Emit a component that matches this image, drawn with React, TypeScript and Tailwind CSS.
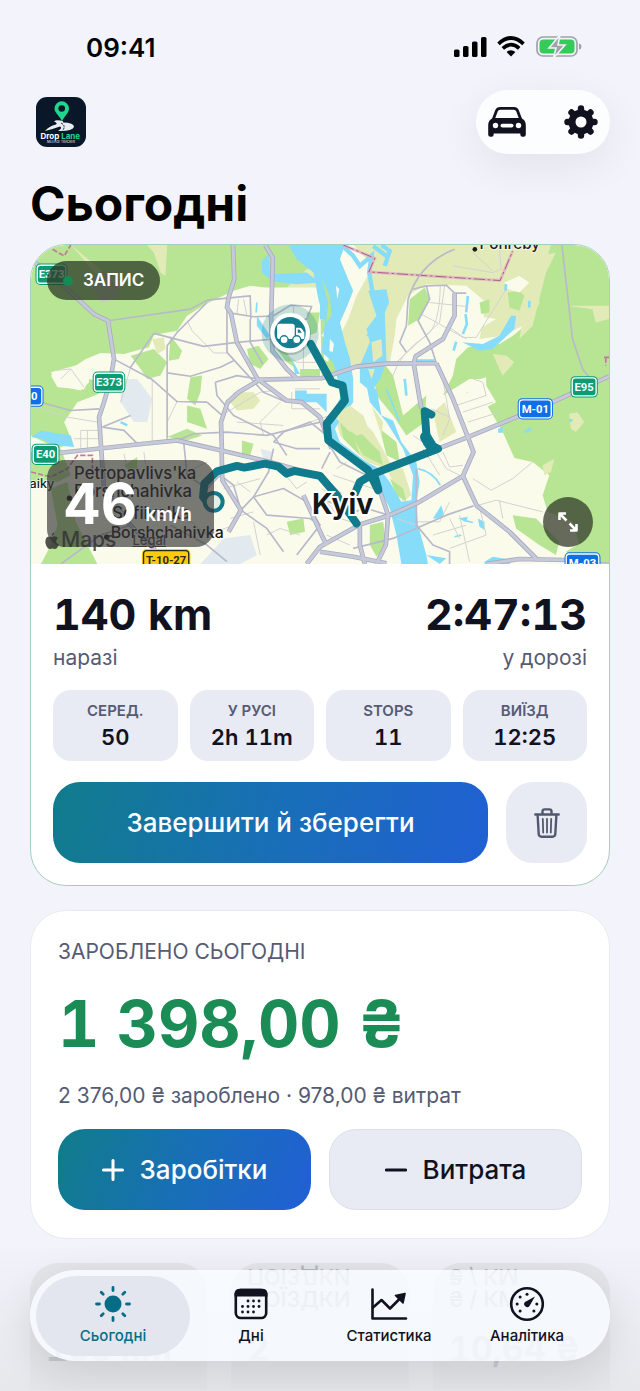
import type { ReactNode } from "react";

type Shield = {
  x: number;
  y: number;
  w: number;
  label: string;
  fill: string;
  ink?: string;
};

const shields: Shield[] = [
  { x: 92, y: 115, w: 96, label: "E373", fill: "#0b9c74" },
  { x: 265, y: 440, w: 98, label: "E373", fill: "#0b9c74" },
  { x: 1695, y: 454, w: 82, label: "E95", fill: "#0b9c74" },
  { x: 74, y: 657, w: 84, label: "E40", fill: "#0b9c74" },
  { x: 30, y: 482, w: 76, label: "30", fill: "#0f6fe8" },
  { x: 1548, y: 520, w: 106, label: "M-01", fill: "#0f6fe8" },
  { x: 1690, y: 984, w: 108, label: "M-03", fill: "#0f6fe8" },
  { x: 437, y: 974, w: 146, label: "T-10-27", fill: "#ffcb0b", ink: "#2a2a1c" },
];

const majorRoads = [
  "M30 70 L140 160 L220 235 L262 255 L280 370 L270 430 L250 500 L235 545 L245 690 L250 760 L330 870 L400 940 L420 990",
  "M638 27 L642 130 L625 185 L620 215 L632 232 L650 320 L712 430 L800 495 L845 500 L900 545 L935 640",
  "M735 27 L758 65 L753 250 L757 345 L800 400 L832 430",
  "M605 650 L602 560 L622 500 L655 470 L720 432 L905 428 L1010 393 L1100 384 L1250 383",
  "M1305 172 L1305 240 L1270 310 L1188 362 L1182 383 L1205 520",
  "M1250 383 L1300 490 L1345 605 L1362 650 L1330 722 L1372 812 L1470 890 L1555 975",
  "M1770 422 L1600 500 L1345 605 L1255 640",
  "M30 662 L140 650 L370 625 L470 615 L600 645 L750 680 L900 722 L960 780",
  "M604 645 L606 735 L662 825 L625 890",
  "M1330 722 L1200 800 L1105 842 L1020 868 L900 935 L860 987",
  "M1080 765 L1105 840 L1098 930 L1070 987",
  "M1020 868 L1020 930 L1035 987",
  "M850 780 L905 900 L920 930",
  "M900 950 L1000 965 L1100 985",
  "M1400 987 L1500 972 L1640 975 L1770 990",
];

const mediumRoads = [
  "M30 492 L150 525 L235 520",
  "M760 640 L745 710 L700 785 L662 825 L740 880 L790 950",
  "M262 255 L510 220 L560 193 L690 180 L692 250",
  "M632 232 L700 243 L755 241",
  "M620 215 L620 350 L730 470 L800 500",
  "M400 293 L550 332 L650 320 L760 310",
  "M400 293 L330 395 M283 372 L395 432 L470 498 L560 500",
  "M440 610 V330 L470 290 L560 200",
  "M440 412 L510 422 L600 395 L640 375",
  "M690 250 L690 320 L728 385",
  "M760 240 L812 208 L875 212 L860 250 L800 262",
  "M585 440 L590 480 L640 540 L760 600 L800 660",
  "M585 440 L650 420 L712 430",
  "M560 500 L605 540 M470 615 L520 595 L620 590 L740 600 L900 560",
  "M245 575 L310 585 L350 625 M245 575 L330 540",
  "M490 622 L500 720 L560 760 L600 720",
  "M600 720 L640 750 L662 825 M700 785 L790 760 L860 800 L900 870 L830 960",
  "M700 785 L740 840 L870 850 L900 870",
  "M760 620 L830 640 L900 640 M760 620 L790 590 L870 560 L920 600",
  "M1305 40 Q1200 80 1165 190 L1160 270 L1140 320 L1160 350",
  "M1180 160 L1220 150 L1280 148 L1305 172 L1340 172",
  "M1220 150 L1230 190 L1195 255 L1230 320 L1250 383",
  "M1628 27 L1660 310 L1690 400 L1715 430",
  "M1205 492 L1210 570 L1225 640",
  "M1362 812 L1280 840 L1120 910 L1000 940",
  "M1190 700 V870 L1240 930 L1290 950 L1290 987",
  "M935 640 L960 680 L1040 720 L1080 765 M905 700 L930 650",
  "M880 780 L1000 830 L1040 820 L1100 838",
  "M450 870 L560 930 L620 980 M120 987 L240 900 L330 870",
];

const minorRoads = [
  "M30 500 L60 520 L140 545 L230 560 M180 585 H245 M180 585 V640 M160 610 H240 M200 585 V645",
  "M500 255 L515 285 L560 330 L580 352 L620 352",
  "M100 405 L150 400 L190 455 M150 400 L120 430",
  "M395 432 V620 M330 395 L300 500 M470 498 L440 560",
  "M655 190 L650 235 M670 190 L680 240 M780 345 L830 380 L900 380 M820 210 L825 340 M850 260 V400",
  "M620 530 L720 470 L760 465 M780 500 L720 560 L730 600 M650 560 L790 570",
  "M815 470 V520 H900 M825 460 H900 M870 560 L930 540",
  "M1120 420 Q1140 350 1220 300 Q1260 270 1262 150 M1130 380 L1260 260 L1275 150",
  "M1230 200 L1340 212 M1205 235 L1260 265 L1330 305 L1370 305 L1460 160 M1290 275 L1340 310",
  "M1300 90 L1420 110 L1445 100 L1440 40 M1360 50 L1420 105",
  "M1270 430 L1290 550 L1270 600 M1235 520 L1290 545 M1310 510 L1400 480 L1390 440 L1360 430 M1330 530 L1420 500 M1345 560 L1440 530",
  "M1180 600 L1250 650 L1280 700 L1320 720 M1270 650 L1290 695 L1330 690 M1210 640 L1260 720",
  "M1360 730 L1415 765 L1480 730 L1540 680 M1370 812 L1430 795 L1570 830 M1440 795 L1450 850",
  "M1190 860 H1260 L1290 800 M1240 900 L1340 870 M1290 850 L1320 910 M1320 840 L1350 980 M1380 815 L1400 900 L1290 940",
  "M700 860 L720 960 M500 850 L560 900 L640 870 M740 900 L780 880 L840 900 M520 700 L560 680",
  "M920 800 L960 850 L1010 865 M940 720 L1060 760 M950 700 L980 680 M905 760 L940 790 M1130 850 L1190 870 M920 900 L990 930",
  "M610 760 L720 730 M650 740 L690 770 M370 650 L380 720 M630 850 L700 830 M780 700 L830 760 L860 740 M310 655 L320 700",
];

// Main route, spur to the east bank and the western leg
const trackLines = [
  "M872 325 L935 440 L968 450 L975 495 L920 565 L925 615 L1045 705 L1075 765",
  "M1075 760 L1062 715 L1255 640 L1222 622 L1215 527 L1235 537",
  "M1062 715 L1020 740 L1005 775",
  "M560 800 L548 785 L552 745 L590 708 L650 692 L672 697 L735 685 L775 694 L800 715 L822 707 L900 722 L950 780 L1010 865",
];

function CityMap() {
  return (
    <svg
      viewBox="30 27 1740 960"
      preserveAspectRatio="xMidYMid slice"
      className="block h-full w-full"
      fontFamily="Inter, sans-serif"
      role="img"
      aria-label="Kyiv"
    >
      <rect x="30" y="27" width="1740" height="960" fill="#fbfbec" />

      {/* Forest and parks */}
      <g fill="#b8e593">
        <path d="M30 27 H830 L850 60 L900 120 L800 155 H735 L690 150 L640 165 L555 205 L500 240 L470 285 L400 298 L385 335 L310 355 L240 352 L195 370 L150 400 L90 420 L110 455 L190 462 L205 430 L240 440 L235 475 L170 500 L130 560 L155 620 L110 640 L30 600Z" />
        <path d="M1590 27 H1770 V987 H1700 L1640 950 L1680 925 L1660 860 L1585 830 L1570 780 L1590 720 L1540 680 L1485 668 L1450 590 L1400 505 L1340 470 L1400 460 L1380 430 L1350 430 L1270 480 L1300 420 L1310 370 L1345 335 L1440 325 L1480 300 L1530 260 L1560 200 L1550 150Z" />
        <path d="M30 650 L120 640 L150 720 L110 740 L30 740Z M90 760 L140 740 L165 860 L230 987 H60 L90 930 L110 870Z" />
        <path d="M330 360 L400 340 L440 380 L420 420 L380 430 L360 400Z M450 300 L485 345 L475 370 L445 375Z M510 425 L545 420 L540 470 L525 510 L500 490Z M500 510 L540 520 L560 580 L500 560Z M440 605 L500 580 L545 600 L500 615Z" />
        <path d="M680 340 L715 330 L745 370 L720 400 L690 385Z M665 615 L700 625 L690 660 L665 655Z M310 690 L350 665 L350 700 L330 710Z M800 860 L850 850 L855 890 L810 900Z M840 400 L900 400 V425 H840Z" />
        <path d="M1480 840 L1550 850 L1620 920 L1610 960 L1560 930 L1490 880Z M1050 870 L1090 860 L1100 930 L1070 965 L1050 930Z" />
        <path d="M900 150 L940 190 L930 260 L905 300 L940 330 L960 400 L930 440 L905 420Z M860 230 H900 L890 290 L865 300Z M770 340 L800 350 L830 400 L800 380Z" />
        <path d="M1170 190 L1215 155 L1230 190 L1200 250 L1165 270Z M970 360 L1060 340 L1120 420 L1150 540 L1220 480 L1215 560 L1160 600 L1120 540 L1070 480 L1060 400 L1000 400Z" />
      </g>
      <g fill="#e2eab7">
        <path d="M1000 27 H1595 L1580 75 L1550 150 L1560 200 L1530 260 L1450 300 L1380 310 L1400 200 L1340 150 L1220 145 L1165 180 L1130 250 L1125 300 L1110 380 L1060 370 L970 400 L960 300 L985 250 L1010 180 L1060 90Z" />
        <path d="M800 155 L860 100 L900 90 L910 155Z M150 27 L300 150 L290 160 L220 110 L180 60Z M380 27 H440 L435 120 L420 110 L400 50Z" />
        <path d="M640 470 L700 470 L720 495 L700 520 L650 525 L630 500Z M1640 210 H1770 V250 L1730 260 L1720 220Z M1420 355 L1460 360 L1485 380 L1450 420 L1440 400Z M1650 535 L1675 530 L1695 560 L1670 590 L1655 580Z M1570 690 L1605 670 L1595 710 L1575 720Z" />
        <path d="M940 520 L970 500 L1060 590 L1110 680 L1150 700 L1175 780 L1150 800 L1100 700 L1040 680 L960 600Z M1560 60 L1610 50 L1580 110 L1540 270 L1500 310 L1510 250Z" />
        <path d="M395 310 L430 305 L435 340 L410 355Z M1240 530 L1275 500 L1310 590 L1260 620Z" />
      </g>
      <g fill="#b8e593">
        <path d="M1465 170 L1500 165 L1515 180 L1500 225 L1470 215Z M1380 200 L1410 190 L1410 230 L1385 235Z M1080 580 L1130 620 L1140 680 L1100 660Z M1110 730 L1150 760 L1160 800 L1130 780Z M960 560 L1000 600 L1020 660 L970 610Z" />
      </g>
      <g fill="#fbfbec">
        <path d="M1455 140 L1500 120 L1530 140 L1500 170 L1465 160Z M1360 240 L1430 250 L1360 290Z M20 800 L70 770 L90 850 L30 860Z M90 410 L200 380 L205 440 L180 465 L110 450Z" />
        <path d="M1350 440 L1400 425 L1400 450 L1430 500 L1400 515 L1340 500Z M910 320 L930 330 L925 380 L912 370Z" />
      </g>
      <path d="M200 130 L250 105 L300 165 L285 190 L240 200Z" fill="#c9cbc3" />
      <path
        d="M300 430 L350 430 L395 490 L380 560 L340 560 L300 500Z M610 910 L690 900 L710 960 L660 987 H540Z M720 640 L760 650 L740 700Z"
        fill="#e2e9ef"
      />

      {/* Dnipro and lakes */}
      <g fill="#87dcf9">
        <path d="M805 27 H975 L960 70 L985 130 L1000 165 L980 215 L960 260 L975 320 L990 370 L1000 430 L1000 500 L970 540 L945 580 L960 620 L1040 680 L1080 700 L1110 740 L1145 800 L1175 795 L1180 720 L1150 640 L1100 560 L1050 500 L1040 450 L1070 460 L1085 540 L1120 555 L1145 620 L1190 680 L1200 740 L1190 800 L1195 870 L1220 960 L1225 987 H1145 L1130 900 L1110 820 L1080 760 L1040 710 L930 620 L918 565 L965 480 L955 440 L940 380 L905 350 L915 260 L895 190 L880 110 L830 70Z" />
        <path d="M1045 165 L1100 160 L1108 200 L1095 230 L1100 380 L1080 430 L1055 470 L1020 440 L1020 390 L1050 320 L1040 280 L1070 240Z" />
        <path d="M1328 320 L1390 325 L1440 300 L1475 240 L1490 240 L1485 280 L1420 340 L1380 345Z M725 75 L745 55 L750 130 L725 110Z M750 115 L860 110 L900 140 L830 145 L750 135Z M710 240 L750 300 L740 310 L710 270Z M815 370 L840 415 L825 415Z M900 165 L925 190 L920 250 L900 250Z M825 465 H860 V475 H920 V530 L890 500 H825Z" />
        <path d="M30 605 L60 585 L150 600 L160 635 L100 630 L60 610Z M1240 850 L1265 810 L1275 845 L1250 850Z M1315 850 L1345 845 L1340 860Z M1375 850 L1395 860 V885 L1380 875Z M1395 980 L1420 965 L1480 975 L1470 987 H1395Z M1220 960 L1280 970 L1260 987Z M1436 580 L1450 575 V592 H1436Z" />
      </g>
      <g fill="none" stroke="#87dcf9" strokeWidth="8">
        <path d="M965 27 L1000 60 L1020 90 L1055 60 L1048 110 L1060 180 M1085 27 L1110 45 L1095 90 M1060 30 L1100 60" strokeWidth="13" />
        <path d="M1345 180 L1340 230 M1338 235 L1342 265 L1330 295 M1310 318 L1302 345 M1155 430 L1160 480 M1460 145 L1458 165 M1530 195 V215 M1190 375 H1245 M1515 590 L1535 580 M1650 555 H1660 M300 560 L320 570" />
        <path d="M1195 700 Q1240 710 1262 750 M1040 300 L1080 280 M1100 460 L1140 560 M1080 400 V430 M1305 905 L1325 900 M1330 855 L1360 862 M710 200 L708 230" strokeWidth="5" />
      </g>
      <g fill="#e2eab7">
        <path d="M905 130 L930 180 L935 240 L918 262 L925 200Z M990 590 L1010 580 L1080 650 L1090 690 L1030 660Z" fill="#b8e593" />
        <path d="M940 540 L990 510 L1030 540 L1050 590 L1010 600 L970 570Z M1055 510 L1090 560 L1085 600Z M1055 320 L1085 310 L1088 360 L1060 380Z M1045 400 L1065 400 L1055 430Z" />
      </g>
      <path d="M930 310 L942 325 L938 350 L928 345Z M948 150 L958 160 L952 190Z" fill="#fbfbec" />

      {/* Administrative border */}
      <g fill="none">
        <path d="M970 27 L1065 67 L1047 108 L1442 134 L1480 45" stroke="#e0b3c0" strokeWidth="9" opacity=".8" />
        <path d="M970 27 L1065 67 L1047 108 L1442 134 L1480 45" stroke="#ad5c90" strokeWidth="3" strokeDasharray="34 8 8 8" />
        <path d="M95 40 L130 60 L150 27 M1755 365 H1775 M1760 365 V390 M30 710 L90 725 L140 700 L170 660 L215 660 L215 700" stroke="#c077a0" strokeWidth="5" strokeDasharray="16 6" />
      </g>

      {/* Streets */}
      <g fill="none" strokeLinejoin="round">
        {minorRoads.map((d) => (
          <path key={d} d={d} stroke="#d2d2d2" strokeWidth="3" />
        ))}
        {mediumRoads.map((d) => (
          <path key={d} d={d} stroke="#b8b9ca" strokeWidth="5" />
        ))}
        {majorRoads.map((d) => (
          <path key={d} d={d} stroke="#a9abbf" strokeWidth="14" />
        ))}
        {majorRoads.map((d) => (
          <path key={d} d={d} stroke="#c6c9d9" strokeWidth="9" />
        ))}
      </g>

      {shields.map((s) => (
        <g key={`${s.x}-${s.y}`}>
          <rect x={s.x - s.w / 2} y={s.y - 32} width={s.w} height="64" rx="14" fill={s.fill} />
          <rect x={s.x - s.w / 2 + 5} y={s.y - 27} width={s.w - 10} height="54" rx="10" fill="none" stroke={s.ink ?? "#fff"} strokeWidth="4" />
          <text
            x={s.x}
            y={s.y + 12}
            textAnchor="middle"
            fontFamily="Roboto, sans-serif"
            fontSize="34"
            fontWeight="700"
            fill={s.ink ?? "#fff"}
          >
            {s.label}
          </text>
        </g>
      ))}

      {/* Recorded track */}
      <circle cx="810" cy="292" r="86" fill="#0f7c8e" opacity=".22" />
      <g fill="none" stroke="#0f7b8c" strokeWidth="24" strokeLinecap="round" strokeLinejoin="round">
        {trackLines.map((d) => (
          <path key={d} d={d} />
        ))}
      </g>
      <path d="M1218 605 L1232 628" stroke="#0f7b8c" strokeWidth="34" strokeLinecap="round" />
      <circle cx="580" cy="800" r="27" fill="#e6efe6" stroke="#0f7b8c" strokeWidth="12" />

      {/* Place names */}
      <g fill="#1c1c1a" stroke="#fff" strokeOpacity=".6" strokeWidth="6" paintOrder="stroke" fontSize="46" fontWeight="500">
        <circle cx="1366" cy="40" r="7" stroke="none" />
        <text x="1380" y="39">Pohreby</text>
        <text x="26" y="757" fontSize="38">aiky</text>
        <text x="160" y="731" fontSize="50">Petropavlivs'ka</text>
        <text x="160" y="786" fontSize="50">Borshchahivka</text>
        <circle cx="146" cy="789" r="8" stroke="none" />
        <text x="275" y="853" fontSize="50">Sofiivs'ka</text>
        <text x="270" y="908" fontSize="48">Borshchahivka</text>
        <circle cx="258" cy="906" r="8" stroke="none" />
      </g>
      <text x="876" y="838" fontSize="86" fontWeight="700" fill="#161616" stroke="#fff" strokeWidth="12" paintOrder="stroke">
        Kyiv
      </text>

      {/* Vehicle marker */}
      <circle cx="810" cy="295" r="63" fill="#000" opacity=".16" />
      <circle cx="810" cy="291" r="60" fill="#fff" />
      <circle cx="810" cy="291" r="47" fill="#127e90" />
      <g fill="#fff">
        <rect x="771" y="264" width="53" height="46" rx="8" />
        <path d="M828 276 H838 Q843 276 846 280 L853 290 V306 Q853 310 849 310 H828Z" />
        <path d="M833 281 H838 L845 291 H833Z" fill="#127e90" />
        <circle cx="792" cy="312" r="12" stroke="#127e90" strokeWidth="4" />
        <circle cx="830" cy="312" r="12" stroke="#127e90" strokeWidth="4" />
      </g>
    </svg>
  );
}

function StatusIcons() {
  return (
    <svg viewBox="0 0 128 24" className="h-6 w-32" aria-hidden="true">
      <g>
        <rect x="0" y="13.500" width="5.500" height="7.500" rx="1.600" />
        <rect x="9" y="10" width="5.500" height="11" rx="1.600" />
        <rect x="18" y="5.500" width="5.500" height="15.500" rx="1.600" />
        <rect x="27" y="1" width="5.500" height="20" rx="1.600" />
      </g>
      <g fill="none" stroke="#000" strokeWidth="3.700">
        <path d="M44.500 7.800 Q57 -3.800 69.500 7.800" />
        <path d="M48.800 12.300 Q57 5 65.200 12.300" />
      </g>
      <path d="M52.600 16 Q57 12.400 61.400 16 L57 20.600Z" />
      <rect x="83" y="1" width="40" height="19" rx="6" fill="none" stroke="#a1a2a8" strokeWidth="1.700" />
      <path d="M125 7.500 Q127.500 8 127.500 10.500 Q127.500 13 125 13.500Z" fill="#a1a2a8" />
      <rect x="85.500" y="3.500" width="35" height="14" rx="4" fill="#34cb59" />
      <path d="M106 -1 L95 12 H102 L99.500 22 L111 9 H104Z" fill="#a1a2a8" stroke="#f2f3fb" strokeWidth="1.600" />
    </svg>
  );
}

function Logo() {
  return (
    <svg viewBox="0 0 50 50" className="size-[50px]" role="img" aria-label="Drop Lane">
      <rect width="50" height="50" rx="11" fill="#0a1728" />
      <path d="M26 24 C22 17 18.500 15.500 18.500 11.500 A7.200 7.200 0 0 1 33 11.500 C33 15.500 29.500 18 26 24Z" fill="#1fd68d" />
      <circle cx="25.700" cy="11.500" r="3.300" fill="#0a1728" />
      <path d="M18 24.500 Q20 22.500 24 23.500 Q28 24 27 25.500 Q38 25.500 38 30 Q36 34.500 22 34 Q27 31 24 29.500 Q17 32 9 34 Q13 29 20 27.500Q22 26 18 24.500Z" fill="#e8edf2" />
      <path d="M25 26 Q30 28.500 27 33" fill="none" stroke="#0a1728" strokeWidth="1" strokeDasharray="2 1" />
      <text x="4.500" y="41.500" fontFamily="Inter, sans-serif" fontSize="8" fontWeight="700" fill="#fff">
        Drop <tspan fill="#1fd68d">Lane</tspan>
      </text>
      <text x="25" y="46" textAnchor="middle" fontFamily="Inter, sans-serif" fontSize="3" fontWeight="600" fill="#c3cad4">
        MILEAGE TRACKER
      </text>
    </svg>
  );
}

function CarIcon() {
  return (
    <svg viewBox="0 0 38 30" className="h-[30px] w-[38px]" fill="#11121f" aria-hidden="true">
      <path d="M5 13 L8.500 3.800 Q9.500 1.400 12.200 1.400 H25.800 Q28.500 1.400 29.500 3.800 L33 13" fill="none" stroke="#11121f" strokeWidth="2.800" />
      <path d="M5 11 H33 Q37.800 13 37.800 18 V27.500 Q37.800 29.800 35.600 29.800 H34.500 Q32.300 29.800 32.300 27.500 V26.500 H5.700 V27.500 Q5.700 29.800 3.500 29.800 H2.400 Q.2 29.800 .2 27.500 V18 Q.2 13 5 11Z" />
      <g fill="#fcfdff">
        <circle cx="7.500" cy="18.500" r="2.700" />
        <circle cx="30.500" cy="18.500" r="2.700" />
        <rect x="12.500" y="16.700" width="13" height="3.800" rx="1.900" />
      </g>
    </svg>
  );
}

function GearIcon() {
  return (
    <svg viewBox="-17 -17 34 34" className="size-[34px]" aria-hidden="true">
      <circle r="9" fill="none" stroke="#11121f" strokeWidth="7" />
      <g stroke="#11121f" strokeWidth="6.400" strokeLinecap="round">
        <path d="M0 -11 V-13.500 M0 11 V13.500 M-11 0 H-13.500 M11 0 H13.500" />
        <path d="M8 -8 L9.500 -9.500 M-8 -8 L-9.500 -9.500 M8 8 L9.500 9.500 M-8 8 L-9.500 9.500" />
      </g>
    </svg>
  );
}

function TrashIcon() {
  return (
    <svg viewBox="0 0 26 30" className="h-[30px] w-[26px]" fill="none" stroke="#525870" strokeWidth="2.400" strokeLinecap="round" strokeLinejoin="round" aria-hidden="true">
      <path d="M1.300 6.500 H24.700 M8.500 6 V3.500 Q8.500 1.400 10.600 1.400 H15.400 Q17.500 1.400 17.500 3.500 V6" />
      <path d="M3.600 7 L4.700 26 Q4.900 28.700 7.500 28.700 H18.500 Q21.100 28.700 21.300 26 L22.400 7" />
      <path d="M8.800 11 L9.200 24.500 M13 11 V24.500 M17.200 11 L16.800 24.500" strokeWidth="1.800" />
    </svg>
  );
}

function SunIcon() {
  return (
    <svg viewBox="-18 -18 36 36" className="size-9" aria-hidden="true">
      <circle r="8.500" fill="#056e86" />
      <path
        d="M0 -13.500 V-16.500 M0 13.500 V16.500 M-13.500 0 H-16.500 M13.500 0 H16.500 M9.800 -9.800 L11.800 -11.800 M-9.800 -9.800 L-11.800 -11.800 M9.800 9.800 L11.800 11.800 M-9.800 9.800 L-11.800 11.800"
        stroke="#056e86"
        strokeWidth="2.800"
        strokeLinecap="round"
      />
    </svg>
  );
}

function CalendarIcon() {
  const dots = [
    [15, 15], [20.5, 15], [26, 15],
    [9.5, 20.5], [15, 20.5], [20.5, 20.5], [26, 20.5],
    [9.5, 26], [15, 26], [20.5, 26],
  ];
  return (
    <svg viewBox="0 0 36 36" className="size-9" aria-hidden="true">
      <rect x="2.800" y="4" width="30.400" height="28" rx="5" fill="none" stroke="#11121f" strokeWidth="2.600" />
      <path d="M1.500 10.500 V8 Q1.500 2.700 7 2.700 H29 Q34.500 2.700 34.500 8 V10.500Z" fill="#11121f" />
      {dots.map(([x, y]) => (
        <circle key={`${x}-${y}`} cx={x} cy={y} r="1.400" fill="#11121f" />
      ))}
    </svg>
  );
}

function ChartIcon() {
  return (
    <svg viewBox="0 0 38 36" className="h-9 w-[38px]" fill="none" stroke="#11121f" strokeWidth="2.600" strokeLinecap="round" strokeLinejoin="round" aria-hidden="true">
      <path d="M2.500 3.500 V32.500 H36" />
      <path d="M3 21.500 L11.500 14 L20 22.500 L31 11.500" />
      <path d="M35 7.500 L25.500 9.500 L33 17Z" fill="#11121f" strokeWidth="1.600" />
    </svg>
  );
}

function GaugeIcon() {
  return (
    <svg viewBox="-18 -18 36 36" className="size-9" fill="#11121f" aria-hidden="true">
      <circle r="15.800" fill="none" stroke="#11121f" strokeWidth="2.600" />
      <circle cx="0" cy="-9.800" r="1.500" />
      <circle cx="-6.900" cy="-6.900" r="1.500" />
      <circle cx="-9.800" cy="0" r="1.500" />
      <circle cx="9.800" cy="0" r="1.500" />
      <circle cx="-6.900" cy="6.900" r="1.500" />
      <circle cx="6.900" cy="6.900" r="1.500" />
      <path d="M8 -7.500 L2.500 2 A3 3 0 1 1 -2 -2Z" />
    </svg>
  );
}

function StatTile({ label, value }: { label: string; value: string }) {
  return (
    <div className="flex h-[71px] flex-col items-center justify-center gap-0.5 rounded-[18px] bg-[#e8eaf4]">
      <span className="text-[15px] font-semibold leading-5 text-[#565b74]">{label}</span>
      <span className="text-[22px] font-semibold leading-7 tabular-nums text-[#11121f]">{value}</span>
    </div>
  );
}

function TabItem({ label, icon, active }: { label: string; icon: ReactNode; active?: boolean }) {
  return (
    <a
      href="#"
      aria-current={active ? "page" : undefined}
      className={`flex h-20 flex-col items-center justify-center rounded-full text-[15px] font-medium leading-5 ${
        active ? "-mx-2 bg-[#dfe3ec]/85 text-[#056e86]" : "text-[#11121f]"
      }`}
    >
      {icon}
      <span className="mt-1">{label}</span>
    </a>
  );
}

const stats = [
  { label: "СЕРЕД.", value: "50" },
  { label: "У РУСІ", value: "2h 11m" },
  { label: "STOPS", value: "11" },
  { label: "ВИЇЗД", value: "12:25" },
];

const totals = [
  { label: "", value: "106 km" },
  { label: "ПОЇЗДКИ", value: "2" },
  { label: "₴ / КМ", value: "10,64 ₴" },
];

export default function App() {
  return (
    <div className="relative min-h-screen overflow-hidden bg-[#f2f3fb] px-[30px] font-['Inter',sans-serif] text-black">
      {/* Status bar */}
      <div className="flex h-[90px] items-center justify-between pl-14 pr-7 pt-1.5">
        <span className="text-[26px] font-semibold leading-8">09:41</span>
        <StatusIcons />
      </div>

      <header>
        <div className="flex h-16 items-center justify-between pl-1.5">
          <Logo />
          <div className="flex h-16 w-[134px] items-center justify-between rounded-full bg-[#fcfdff] px-3 shadow-[0_12px_44px_rgba(0,0,0,0.07)]">
            <button type="button" aria-label="Авто">
              <CarIcon />
            </button>
            <button type="button" aria-label="Налаштування">
              <GearIcon />
            </button>
          </div>
        </div>
        <h1 className="mb-2.5 mt-5 text-[48px] font-bold leading-[60px]">Сьогодні</h1>
      </header>

      {/* Active trip */}
      <section className="overflow-hidden rounded-[36px] border border-[#a3cfc0] bg-white">
        <div className="relative h-[319px]">
          <CityMap />
          <div className="absolute left-4 top-4 flex h-[39px] items-center gap-2.5 rounded-full bg-[#2c3a25]/75 px-4 text-[17px] font-semibold text-white">
            <span className="size-2.5 rounded-full bg-[#158a55]" />
            ЗАПИС
          </div>
          <div className="absolute bottom-[17px] left-4 flex h-[87px] w-[167px] items-center gap-2 rounded-[18px] bg-[#333]/65 pl-4 text-white">
            <span className="text-[56px] font-bold leading-[56px]">46</span>
            <span className="pt-6 text-[19px] font-semibold">km/h</span>
          </div>
          <div className="absolute bottom-2.5 left-3.5 flex items-center gap-4 text-[#333]/85">
            <span className="flex items-center text-[21px] font-medium leading-7">
              <svg viewBox="0 0 14 17" className="mr-0.5 h-[17px] w-3.5" fill="currentColor" aria-hidden="true">
                <path d="M9.500 0 Q9.500 3 6.800 4 Q6.800 1 9.500 0Z M7 5 Q10.500 3.300 13 6 Q10.500 8 11.500 11 L13.800 12.500 Q12 17 10 17 Q7 16 5 17 Q2 17 .4 11 Q0 4.500 4 4.500Z" />
              </svg>
              Maps
            </span>
            <a href="#" className="text-[13px] font-medium leading-4 underline">
              Legal
            </a>
          </div>
          <button
            type="button"
            aria-label="Розгорнути мапу"
            className="absolute bottom-[17px] right-4 flex size-[50px] items-center justify-center rounded-full bg-[#333a2b]/75"
          >
            <svg viewBox="0 0 20 20" className="size-5" fill="none" stroke="#fff" strokeWidth="2.600" strokeLinejoin="round" aria-hidden="true">
              <path d="M1.500 8 V1.500 H8 M1.500 1.500 L8.500 8.500 M18.500 12 V18.500 H12 M18.500 18.500 L11.500 11.500" />
            </svg>
          </button>
        </div>

        <div className="px-[22px] pb-[22px] pt-6">
          <div className="flex justify-between text-[43px] font-bold leading-[52px] tabular-nums text-[#11121f]">
            <span>140 km</span>
            <span>2:47:13</span>
          </div>
          <div className="mt-1 flex justify-between text-[21px] leading-7 text-[#565b74]">
            <span>наразі</span>
            <span>у дорозі</span>
          </div>
          <div className="mt-[18px] grid grid-cols-4 gap-3">
            {stats.map((s) => (
              <StatTile key={s.label} label={s.label} value={s.value} />
            ))}
          </div>
          <div className="mt-[21px] flex gap-[18px]">
            <button
              type="button"
              className="h-[81px] flex-1 rounded-[27px] bg-linear-[105deg,#117b8e_3%,#186fb6_50%,#2061d2_97%] text-[26px] font-medium text-white"
            >
              Завершити й зберегти
            </button>
            <button
              type="button"
              aria-label="Видалити поїздку"
              className="flex size-[81px] items-center justify-center rounded-[27px] bg-[#e8eaf4]"
            >
              <TrashIcon />
            </button>
          </div>
        </div>
      </section>

      {/* Earnings */}
      <section className="mt-6 rounded-[36px] border border-[#e9eaf0] bg-white px-[27px] pb-7 pt-[27px]">
        <h2 className="text-[21px] leading-7 text-[#565b74]">ЗАРОБЛЕНО СЬОГОДНІ</h2>
        <p className="mt-5 text-[64px] font-bold leading-[76px] tabular-nums text-[#1b8c56]">1 398,00 ₴</p>
        <p className="mt-5 text-[21px] leading-7 text-[#565b74]">2 376,00 ₴ зароблено · 978,00 ₴ витрат</p>
        <div className="mt-[19px] grid grid-cols-2 gap-[18px]">
          <button
            type="button"
            className="flex h-[81px] items-center justify-center gap-4 rounded-[27px] bg-linear-[110deg,#117b8e_5%,#186fb6_50%,#2061d2_95%] text-[26px] font-medium text-white"
          >
            <svg viewBox="0 0 22 22" className="size-[22px]" stroke="currentColor" strokeWidth="3" strokeLinecap="round" aria-hidden="true">
              <path d="M11 1.500 V20.500 M1.500 11 H20.500" />
            </svg>
            Заробітки
          </button>
          <button
            type="button"
            className="flex h-[81px] items-center justify-center gap-4 rounded-[27px] border border-[#dcdfe7] bg-[#e8eaf4] text-[26px] font-medium text-[#11121f]"
          >
            <svg viewBox="0 0 22 22" className="size-[22px]" stroke="currentColor" strokeWidth="3.200" strokeLinecap="round" aria-hidden="true">
              <path d="M1.500 11 H20.500" />
            </svg>
            Витрата
          </button>
        </div>
      </section>

      {/* Day totals, mostly hidden behind the tab bar */}
      <div className="mt-6 grid grid-cols-3 gap-6">
        {totals.map((t) => (
          <div key={t.value} className="h-[127px] rounded-t-[28px] bg-[#e3e5ea] px-4 pt-1.5 text-[#9299a8]">
            <div aria-hidden="true" className="h-4 -scale-y-100 text-[22px] font-medium leading-4 opacity-70">
              {t.label}
            </div>
            <div className="h-7 text-[22px] font-medium leading-7">{t.label}</div>
            <div className="mt-4 whitespace-nowrap text-[34px] font-bold leading-10 tabular-nums">{t.value}</div>
          </div>
        ))}
      </div>

      <div className="pointer-events-none absolute inset-x-0 bottom-0 h-[153px] bg-linear-to-b from-[#e3e5e8]/0 to-[#e3e5e8]/80" />

      <nav className="absolute inset-x-[30px] bottom-[30px] grid h-[91px] grid-cols-4 items-center rounded-full bg-[#f8fbff]/85 px-3.5 shadow-[0_12px_40px_rgba(0,0,0,0.11)]">
        <TabItem label="Сьогодні" icon={<SunIcon />} active />
        <TabItem label="Дні" icon={<CalendarIcon />} />
        <TabItem label="Статистика" icon={<ChartIcon />} />
        <TabItem label="Аналітика" icon={<GaugeIcon />} />
      </nav>
    </div>
  );
}
